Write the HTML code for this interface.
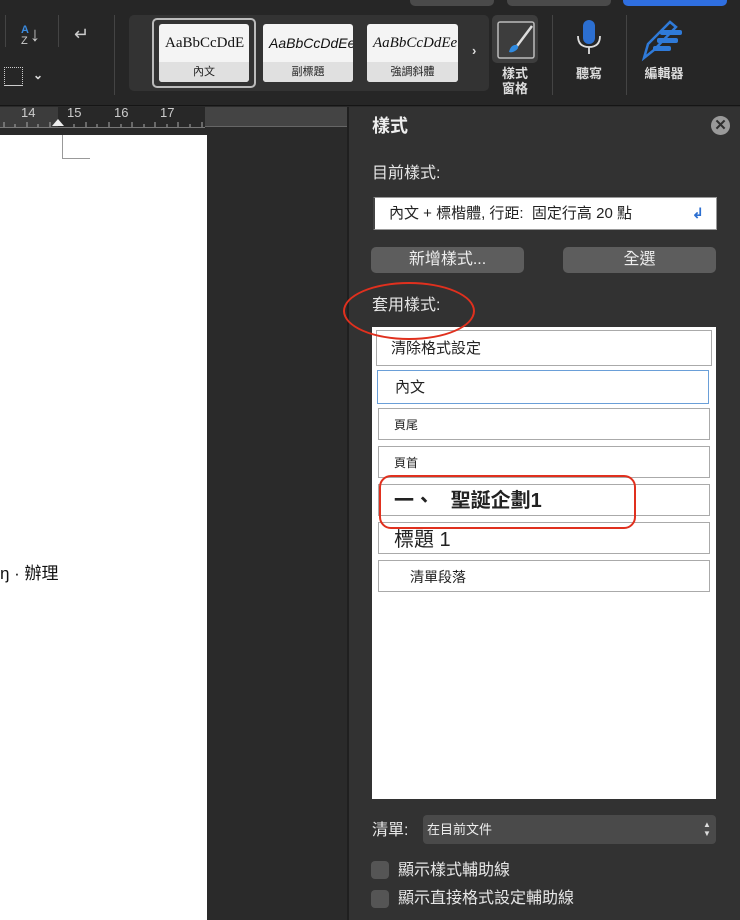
<!DOCTYPE html>
<html><head><meta charset="utf-8"><style>
*{margin:0;padding:0;box-sizing:border-box}
body{width:740px;height:920px;overflow:hidden;background:#2a2a2a;font-family:"Liberation Sans","Noto Sans CJK TC",sans-serif;position:relative;color:#e6e6e6;line-height:1.2}
.a{position:absolute}
.tb{left:0;top:0;width:740px;height:106px;background:#262626;border-bottom:1px solid #151515}
.gal{left:129px;top:15px;width:360px;height:76px;background:#333;border-radius:5px}
.card{background:#f4f4f4;border-radius:3px;width:90px;height:58px;top:9px;overflow:hidden}
.card .s{height:38px;line-height:38px;font-family:"Liberation Serif",serif;font-size:15px;color:#111;white-space:nowrap;padding-left:6px}
.card .l{height:20px;line-height:20px;background:#e0e0e0;color:#222;font-size:11px;text-align:center}
.lbl{font-size:13px;color:#ddd;text-align:center;line-height:15px;font-weight:bold}
.panel{left:347px;top:107px;width:393px;height:813px;background:#323232;border-left:2px solid #1f1f1f}
.row{position:absolute;left:378px;width:332px;height:34px;background:#fff;border:1px solid #aaa;color:#222}
.btn{position:absolute;top:247px;height:26px;background:#5d5d5d;border-radius:5px;color:#eee;font-size:16px;text-align:center;line-height:26px}
.cb{position:absolute;left:371px;width:18px;height:18px;background:#555;border-radius:4px}
</style></head><body>
<div class="a tb"></div>
<div class="a" style="left:410px;top:-6px;width:84px;height:12px;background:#4a4a4a;border-radius:5px"></div>
<div class="a" style="left:507px;top:-6px;width:104px;height:12px;background:#4a4a4a;border-radius:5px"></div>
<div class="a" style="left:623px;top:-6px;width:104px;height:12px;background:#2f6fe0;border-radius:5px"></div>
<div class="a" style="left:5px;top:15px;width:1px;height:32px;background:#444"></div>
<div class="a" style="left:58px;top:15px;width:1px;height:32px;background:#444"></div>
<div class="a" style="left:114px;top:15px;width:1px;height:80px;background:#444"></div>
<div class="a" style="left:21px;top:25px;font-size:11px;color:#3a8be0;font-weight:bold;line-height:10px">A</div>
<div class="a" style="left:21px;top:36px;font-size:11px;color:#ccc;line-height:10px">Z</div>
<div class="a" style="left:30px;top:23px;font-size:20px;color:#ccc;line-height:24px">↓</div>
<div class="a" style="left:74px;top:24px;font-size:18px;color:#ccc">↵</div>
<div class="a" style="left:4px;top:67px;width:19px;height:19px;border:1px dotted #ccc;border-bottom:1px solid #ccc"></div>
<div class="a" style="left:33px;top:68px;font-size:12px;color:#ddd;font-weight:bold">⌄</div>
<div class="a gal"></div>
<div class="a" style="left:152px;top:18px;width:104px;height:70px;border:2px solid #bbb;border-radius:5px"></div>
<div class="a card" style="left:159px;top:24px"><div class="s">AaBbCcDdE</div><div class="l">內文</div></div>
<div class="a card" style="left:263px;top:24px"><div class="s" style="font-family:'Liberation Sans',sans-serif;font-style:italic;font-size:14px">AaBbCcDdEe</div><div class="l">副標題</div></div>
<div class="a card" style="left:367px;top:24px;width:91px"><div class="s" style="font-style:italic">AaBbCcDdEe</div><div class="l">強調斜體</div></div>
<div class="a" style="left:472px;top:43px;font-size:13px;color:#ddd;font-weight:bold">›</div>
<div class="a" style="left:492px;top:15px;width:46px;height:48px;background:#3d3d3d;border-radius:5px"></div>
<svg class="a" style="left:495px;top:18px" width="42" height="44" viewBox="0 0 42 44"><rect x="3" y="4" width="36" height="36" rx="2" fill="none" stroke="#bbb" stroke-width="1.5"/><path d="M37 8 L22 28" stroke="#ddd" stroke-width="2.5"/><path d="M14 34 q2-8 8-7 q3 3-2 6 q-3 2-6 1z" fill="#2f8ae0"/></svg>
<div class="a lbl" style="left:495px;top:66px;width:40px">樣式<br>窗格</div>
<div class="a" style="left:552px;top:15px;width:1px;height:80px;background:#444"></div>
<svg class="a" style="left:574px;top:18px" width="30" height="42" viewBox="0 0 30 42"><rect x="9" y="2" width="12" height="24" rx="6" fill="#2c6fd1"/><path d="M4 18 q0 11 11 11 q11 0 11-11" stroke="#ddd" stroke-width="1.8" fill="none"/><path d="M15 29v7" stroke="#ddd" stroke-width="1.8"/></svg>
<div class="a lbl" style="left:568px;top:66px;width:42px">聽寫</div>
<div class="a" style="left:626px;top:15px;width:1px;height:80px;background:#444"></div>
<svg class="a" style="left:640px;top:18px" width="46" height="44" viewBox="0 0 46 44"><path d="M4 40 L8 26 L30 4 L36 9 L14 32 Z" fill="none" stroke="#2f7ad8" stroke-width="2.5"/><rect x="20" y="12" width="22" height="5" rx="2" fill="#2f7ad8"/><rect x="17" y="20" width="21" height="5" rx="2" fill="#2f7ad8"/><rect x="13" y="28" width="18" height="5" rx="2" fill="#2f7ad8"/></svg>
<div class="a lbl" style="left:640px;top:66px;width:48px">編輯器</div>

<!-- ruler -->
<div class="a" style="left:0;top:107px;width:58px;height:21px;background:#3c3c3c"></div>
<div class="a" style="left:58px;top:107px;width:147px;height:21px;background:#282828"></div>
<div class="a" style="left:205px;top:107px;width:142px;height:20px;background:#444;border-bottom:1px solid #666"></div>
<div class="a" style="left:0;top:127px;width:205px;height:1px;background:#777"></div>
<div class="a" style="left:21px;top:105px;font-size:13px;color:#ccc">14</div>
<div class="a" style="left:67px;top:105px;font-size:13px;color:#ccc">15</div>
<div class="a" style="left:114px;top:105px;font-size:13px;color:#ccc">16</div>
<div class="a" style="left:160px;top:105px;font-size:13px;color:#ccc">17</div>
<svg class="a" style="left:0;top:116px" width="205" height="12"><g stroke="#aaa" stroke-width="1"><path d="M4 6v5M15 8v3M27 6v5M38 8v3M50 6v5M74 8v3M86 6v5M97 8v3M109 6v5M121 8v3M132 6v5M144 8v3M155 6v5M167 8v3M178 6v5M190 8v3M202 6v5"/></g><path d="M52 10 L58 3 L64 10z" fill="#eee"/></svg>

<!-- page -->
<div class="a" style="left:0;top:135px;width:207px;height:785px;background:#fff"></div>
<div class="a" style="left:62px;top:135px;width:1px;height:24px;background:#999"></div>
<div class="a" style="left:62px;top:158px;width:28px;height:1px;background:#999"></div>
<div class="a" style="left:0;top:564px;font-size:17px;color:#111">ŋ · 辦理</div>

<!-- panel -->
<div class="a panel"></div>
<div class="a" style="left:372px;top:116px;font-size:18px;font-weight:bold;color:#eee">樣式</div>
<div class="a" style="left:711px;top:116px;width:19px;height:19px;border-radius:50%;background:#9a9a9a;color:#2f2f2f;font-size:15px;font-weight:bold;text-align:center;line-height:19px">✕</div>
<div class="a" style="left:372px;top:164px;font-size:16px;color:#e6e6e6">目前樣式:</div>
<div class="a" style="left:373px;top:197px;width:344px;height:33px;background:#fff;border:1px solid #999;border-left:2px solid #444"></div>
<div class="a" style="left:389px;top:205px;font-size:15px;color:#222">內文 + 標楷體, 行距:&nbsp; 固定行高 20 點</div>
<div class="a" style="left:692px;top:205px;font-size:14px;color:#2c6fd1;font-weight:bold">↲</div>
<div class="btn" style="left:371px;width:153px">新增樣式...</div>
<div class="btn" style="left:563px;width:153px">全選</div>
<div class="a" style="left:372px;top:296px;font-size:16px;color:#e6e6e6">套用樣式:</div>
<div class="a" style="left:372px;top:327px;width:344px;height:472px;background:#fff"></div>
<div class="row" style="left:376px;top:330px;width:336px;height:36px"><span class="a" style="left:14px;top:9px;font-size:15px">清除格式設定</span></div>
<div class="row" style="left:377px;top:370px;border-color:#6a9fd8"><span class="a" style="left:17px;top:8px;font-size:15px">內文</span></div>
<div class="row" style="top:408px;height:32px"><span class="a" style="left:15px;top:9px;font-size:12px">頁尾</span></div>
<div class="row" style="top:446px;height:32px"><span class="a" style="left:15px;top:9px;font-size:12px">頁首</span></div>
<div class="row" style="top:484px;height:32px"><span class="a" style="left:15px;top:4px;font-size:20px;font-weight:bold;white-space:pre">一、   聖誕企劃1</span></div>
<div class="row" style="top:522px;height:32px"><span class="a" style="left:15px;top:5px;font-size:20px">標題 1</span></div>
<div class="row" style="top:560px;height:32px"><span class="a" style="left:31px;top:8px;font-size:14px">清單段落</span></div>
<div class="a" style="left:379px;top:475px;width:257px;height:54px;border:2.5px solid #e0301e;border-radius:12px"></div>
<div class="a" style="left:343px;top:282px;width:132px;height:58px;border:2.5px solid #e0301e;border-radius:50%"></div>
<div class="a" style="left:372px;top:821px;font-size:16px;color:#e6e6e6">清單:</div>
<div class="a" style="left:423px;top:815px;width:293px;height:29px;background:#4a4a4a;border-radius:4px"></div>
<div class="a" style="left:427px;top:822px;font-size:13px;color:#eee">在目前文件</div>
<div class="a" style="left:703px;top:820px;font-size:8px;color:#ddd;line-height:9px">▲<br>▼</div>
<div class="cb" style="top:861px"></div>
<div class="a" style="left:398px;top:861px;font-size:16px;color:#e6e6e6">顯示樣式輔助線</div>
<div class="cb" style="top:890px"></div>
<div class="a" style="left:398px;top:889px;font-size:16px;color:#e6e6e6">顯示直接格式設定輔助線</div>
</body></html>
